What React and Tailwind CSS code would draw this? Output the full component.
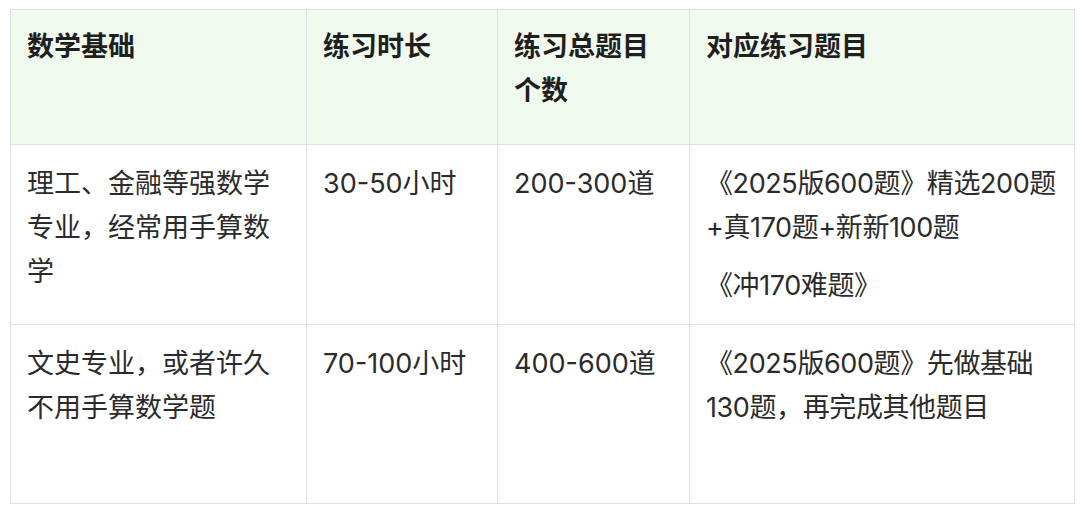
const headers = ["数学基础", "练习时长", "练习总题目个数", "对应练习题目"];

const rows = [
  {
    h: "h-[180px]",
    cells: [
      ["理工、金融等强数学专业，经常用手算数学"],
      ["30-50小时"],
      ["200-300道"],
      ["《2025版600题》精选200题+真170题+新新100题", "《冲170难题》"],
    ],
  },
  {
    h: "h-[179px]",
    cells: [
      ["文史专业，或者许久不用手算数学题"],
      ["70-100小时"],
      ["400-600道"],
      ["《2025版600题》先做基础130题，再完成其他题目"],
    ],
  },
];

export default function App() {
  return (
    <div
      className="w-[1080px] h-[514px] bg-white pl-[10px] pt-[9px]"
      style={{ fontFamily: 'Inter, "Noto Sans CJK SC", sans-serif' }}
    >
      <table className="table-fixed border-collapse w-[1064px] text-[27px] leading-[44px] text-[#2b2b2b]">
        <colgroup>
          <col className="w-[296px]" />
          <col className="w-[191px]" />
          <col className="w-[192px]" />
          <col className="w-[385px]" />
        </colgroup>
        <thead>
          <tr className="h-[135px] bg-[#f0f9ee]">
            {headers.map((h) => (
              <th
                key={h}
                className="border border-[#dfe0e5] align-top text-left font-semibold text-[#1f1f1f] px-4 pt-[15px] pb-4"
              >
                {h}
              </th>
            ))}
          </tr>
        </thead>
        <tbody>
          {rows.map((r, i) => (
            <tr key={i} className={r.h}>
              {r.cells.map((paras, j) => (
                <td
                  key={j}
                  className={
                    j === 3
                      ? "border border-[#dfe0e5] align-top pl-4 pr-3 pt-[17px] pb-4 tracking-[-0.4px]"
                      : "border border-[#dfe0e5] align-top px-4 pt-[17px] pb-4"
                  }
                >
                  {paras.map((p, k) => (
                    <p key={k} className={k > 0 ? "mt-[14px]" : ""}>
                      {p}
                    </p>
                  ))}
                </td>
              ))}
            </tr>
          ))}
        </tbody>
      </table>
    </div>
  );
}
